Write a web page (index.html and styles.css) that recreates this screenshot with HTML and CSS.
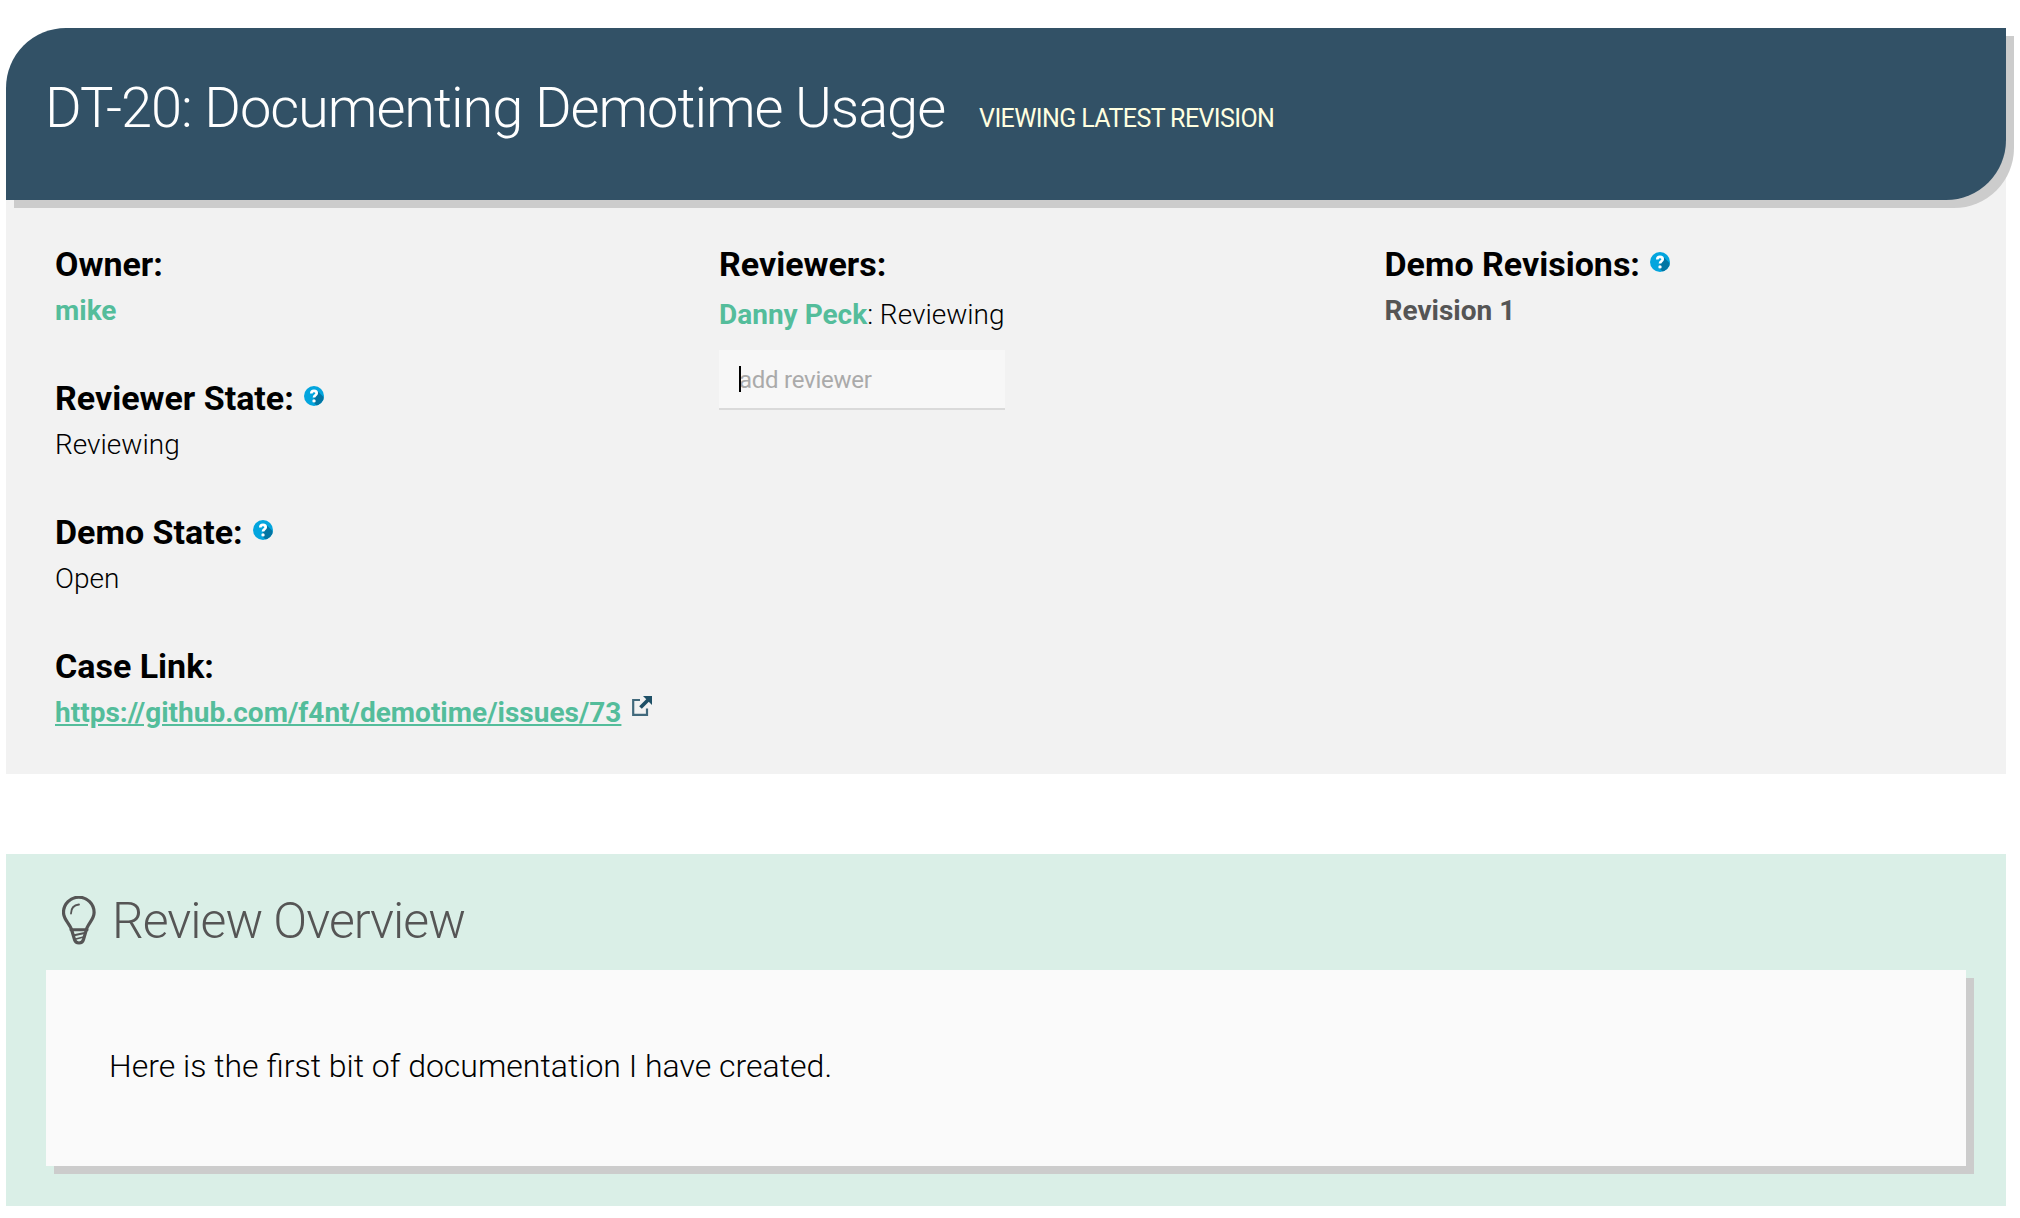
FILE: index.html
```html
<!DOCTYPE html>
<html lang="en">
<head>
<meta charset="utf-8">
<title>DT-20: Documenting Demotime Usage</title>
<link rel="stylesheet" href="styles.css">
</head>
<body>
<svg class="sprite" aria-hidden="true">
  <defs>
    <clipPath id="disc"><circle cx="10" cy="10" r="10"/></clipPath>
    <symbol id="help" viewBox="0 0 20 20">
      <g clip-path="url(#disc)">
        <rect width="20" height="20" fill="#03a5de"/>
        <path d="M13.500 5 24 15.500V24H17L8.600 15.600Z" fill="#0275a3"/>
      </g>
      <path d="M7.300 7.600C7.300 5.600 8.500 4.900 10 4.900s2.700.9 2.700 2.400c0 2-2.700 2-2.700 4.200" fill="none" stroke="#fff" stroke-width="2.700"/>
      <circle cx="10" cy="14.900" r="1.700" fill="#fff"/>
    </symbol>
  </defs>
</svg>
<main class="page">
  <header class="demo-header">
    <h1 class="demo-title">DT-20: Documenting Demotime Usage</h1>
    <span class="demo-revision">Viewing latest revision</span>
  </header>
  <section class="details">
    <div class="column">
      <div class="field">
        <h2 class="label">Owner:</h2>
        <p class="value"><a class="link">mike</a></p>
      </div>
      <div class="field">
        <h2 class="label">Reviewer State: <svg class="help"><use href="#help"/></svg></h2>
        <p class="value">Reviewing</p>
      </div>
      <div class="field">
        <h2 class="label">Demo State: <svg class="help"><use href="#help"/></svg></h2>
        <p class="value">Open</p>
      </div>
      <div class="field">
        <h2 class="label">Case Link:</h2>
        <p class="value"><a class="link link-underlined">https://github.com/f4nt/demotime/issues/73</a><svg class="external" viewBox="0 0 20 20"><path d="M8 4H1.200V18.800H15V12.500" fill="none" stroke="#41697c" stroke-width="2.200"/><path d="M8.500 11.500 16 4" fill="none" stroke="#1f5067" stroke-width="3.800"/><path d="M11 0H20V9Z" fill="#1f5067"/></svg></p>
      </div>
    </div>
    <div class="column">
      <h2 class="label">Reviewers:</h2>
      <div class="reviewers">
        <p class="value"><a class="link">Danny Peck</a>: Reviewing</p>
        <div class="add-reviewer"><input class="reviewer-input" type="text" placeholder="add reviewer"><span class="caret"></span></div>
      </div>
    </div>
    <div class="column">
      <h2 class="label">Demo Revisions: <svg class="help"><use href="#help"/></svg></h2>
      <p class="value revision">Revision 1</p>
    </div>
  </section>
  <section class="overview">
    <h2 class="overview-title"><svg class="bulb" viewBox="0 0 34 50" fill="none" stroke="#555" stroke-linecap="round"><path d="M10 35C8.500 28 1.500 24 1.500 16.500a15.300 15.300 0 0 1 30.600 0C32.100 24 25 28 24 35L21.500 43.500Q20.500 47 17 47T12.500 43.500Z" stroke-width="3.200"/><path d="M9 17.500Q9 9.500 17 8.500" stroke-width="1.800"/><path d="M9 33.700H25" stroke-width="3"/><path d="M11 39.500 22.500 37M12 43.500 21.500 41" stroke-width="1.800"/></svg>Review Overview</h2>
    <div class="overview-body">Here is the first bit of documentation I have created.</div>
  </section>
</main>
</body>
</html>
```

FILE: styles.css
```css
* { box-sizing: border-box; }
body {
  margin: 0;
  background: #fff;
  color: #000;
  font-family: Roboto, "Liberation Sans", sans-serif;
  font-weight: 300;
}
h1, h2, p { margin: 0; }
.sprite { display: block; width: 0; height: 0; }
.page { width: 2000px; margin: 28px 0 0 6px; }
.demo-header {
  position: relative;
  display: flex;
  align-items: baseline;
  gap: 34px;
  height: 172px;
  padding: 48px 39px;
  border-radius: 60px 0 60px 0;
  background: #325166;
  box-shadow: 8px 8px 0 #ccc;
  color: #fff;
}
.demo-title { font-size: 56px; line-height: 64px; font-weight: 300; letter-spacing: -1.050px; }
.demo-revision {
  color: #ffffe0;
  font-size: 25px;
  font-weight: 400;
  letter-spacing: -0.600px;
  text-transform: uppercase;
}
.details {
  display: grid;
  grid-template-columns: 664px 665.500px 1fr;
  height: 634px;
  margin-top: -60px;
  padding: 102px 0 0 49px;
  background: #f2f2f2;
}
.column { display: flex; flex-direction: column; align-items: flex-start; }
.field { margin-bottom: 41px; }
.label { font-size: 34px; line-height: 44px; font-weight: 700; white-space: nowrap; }
.value { padding-top: 1px; font-size: 28px; line-height: 48px; white-space: nowrap; }
.link { color: #54bd9b; font-weight: 700; }
.link-underlined { text-decoration: underline; }
.revision { color: #555; font-weight: 700; }
.help { width: 20px; height: 20px; margin-left: 2px; vertical-align: 4px; }
.external { width: 20px; height: 20px; margin-left: 11px; vertical-align: 6px; }
.reviewers { padding-top: 4px; }
.add-reviewer { position: relative; margin-top: 11px; }
.reviewer-input {
  display: block;
  width: 0;
  min-width: 100%;
  height: 60px;
  padding: 2px 20px 0;
  border: 0;
  border-bottom: 2px solid #dadada;
  background: #f7f7f7;
  font: 400 24px Roboto, sans-serif;
  letter-spacing: -0.250px;
}
.reviewer-input::placeholder { color: #aaa; }
.caret { position: absolute; left: 20px; top: 16px; width: 2px; height: 26px; background: #000; }
.overview { height: 352px; margin-top: 80px; padding: 37px 40px 0; background: #daefe7; }
.overview-title {
  display: flex;
  align-items: center;
  gap: 16px;
  height: 60px;
  margin-bottom: 19px;
  padding-left: 16px;
  color: #555;
  font-size: 50px;
  font-weight: 300;
  letter-spacing: -1px;
}
.bulb { width: 34px; height: 50px; }
.overview-body {
  height: 196px;
  padding: 74px 63px;
  background: #fafafa;
  box-shadow: 8px 8px 0 #ccc;
  font-size: 32px;
  line-height: 44px;
}
```
